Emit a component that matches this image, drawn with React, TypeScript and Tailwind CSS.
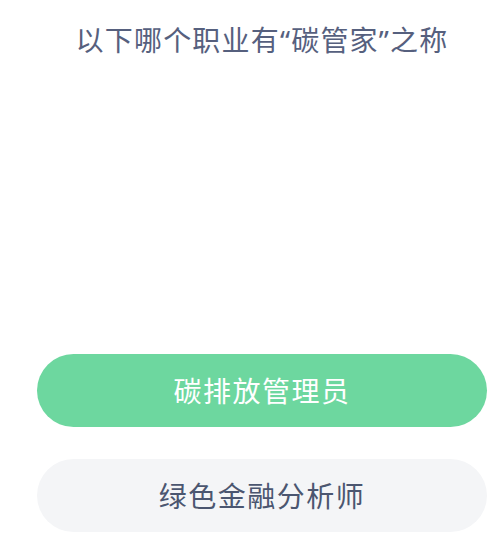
export default function App() {
  const options = [
    { label: "碳排放管理员", active: true },
    { label: "绿色金融分析师", active: false },
  ];

  return (
    <div
      className="w-[499px] h-[553px] bg-white pl-[37px] pt-[20px] overflow-hidden"
      style={{ fontFamily: '"Noto Sans", "Noto Sans CJK SC", sans-serif' }}
    >
      <div className="w-[450px] flex flex-col">
        <h1 className="text-center text-[28px] leading-[40px] tracking-[1.2px] font-normal text-[#56607e]">
          以下哪个职业有“碳管家”之称
        </h1>

        <div className="mt-[294px] flex flex-col gap-[32px]">
          {options.map((opt, i) => (
            <button
              key={i}
              className={`h-[73px] w-full rounded-full text-[28px] leading-none tracking-[1.5px] ${
                opt.active ? "bg-[#6dd79f] text-white" : "bg-[#f4f5f7] text-[#4b5670]"
              }`}
            >
              {opt.label}
            </button>
          ))}
        </div>
      </div>
    </div>
  );
}
